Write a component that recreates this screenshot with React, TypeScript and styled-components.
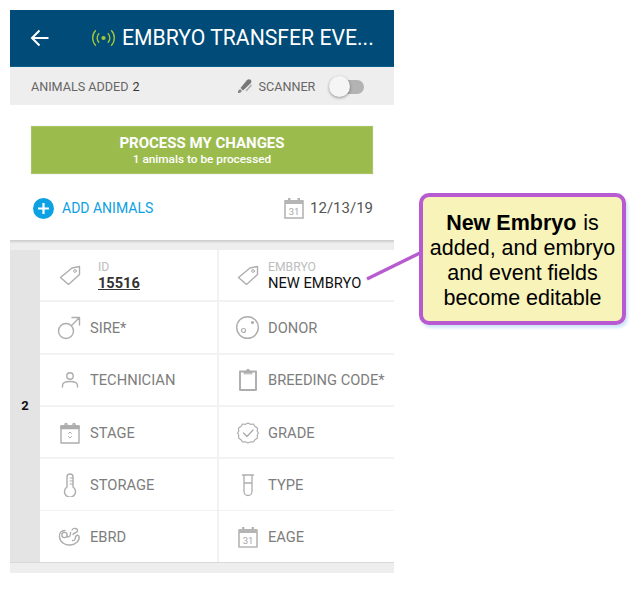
import React from "react";
import styled, { createGlobalStyle } from "styled-components";

const Global = createGlobalStyle`
  html, body { margin: 0; padding: 0; background: #fff; }
  #root { width: 638px; height: 613px; position: relative; overflow: hidden; }
  * { box-sizing: border-box; }
`;

const Phone = styled.div`
  margin: 10px 0 0 10px;
  width: 384px;
  font-family: Roboto, "Liberation Sans", sans-serif;
  display: flex;
  flex-direction: column;
`;

const Header = styled.header`
  height: 57px;
  background: #004b78;
  border-bottom: 1px solid #0b5f8f;
  display: flex;
  align-items: center;
  padding-left: 20px;
  color: #fff;
`;

const BackButton = styled.svg`
  width: 20px;
  height: 20px;
  flex: none;
  margin-right: 41px;
`;

const BeaconIcon = styled.svg`
  width: 25px;
  height: 20px;
  flex: none;
  margin-right: 6px;
`;

const Title = styled.h1`
  margin: 0;
  font-size: 21.2px;
  font-weight: 400;
  line-height: 26px;
  white-space: nowrap;
`;

const StatusBar = styled.div`
  height: 38px;
  background: #eeeeee;
  display: flex;
  align-items: center;
  padding-left: 21px;
  font-size: 12.6px;
  color: #666;
`;

const Count = styled.span`
  color: #333;
  margin-left: 4px;
`;

const ScannerIcon = styled.svg`
  width: 16px;
  height: 16px;
  margin-left: 97px;
  margin-right: 6px;
`;

const Toggle = styled.div`
  position: relative;
  width: 34px;
  height: 14px;
  border-radius: 7px;
  background: #b3b3b3;
  margin-left: 15px;
  margin-top: 1px;
`;

const Knob = styled.div`
  position: absolute;
  left: -1px;
  top: -4px;
  width: 21px;
  height: 21px;
  border-radius: 50%;
  background: #f5f5f5;
  box-shadow: 0 1px 3px rgba(0, 0, 0, 0.4);
`;

const ProcessButton = styled.div`
  margin: 21px 21px 0;
  height: 48px;
  background: #9bbb4d;
  border: 1px solid #a9c566;
  box-shadow: 0 0 1px rgba(0, 0, 0, 0.2);
  color: #fff;
  display: flex;
  flex-direction: column;
  align-items: center;
  justify-content: center;
  padding-top: 1px;
`;

const ProcessTitle = styled.div`
  font-size: 15px;
  font-weight: 700;
  line-height: 17px;
`;

const ProcessSub = styled.div`
  font-size: 11.8px;
  font-weight: 500;
  line-height: 14px;
`;

const ActionRow = styled.div`
  height: 66px;
  display: flex;
  align-items: center;
  padding: 2px 21px 0 23px;
`;

const AddCircle = styled.div`
  width: 21px;
  height: 21px;
  border-radius: 50%;
  background: #0ca1e2;
  display: flex;
  align-items: center;
  justify-content: center;
  margin-right: 8px;
`;

const AddLabel = styled.span`
  color: #0ca1e2;
  font-size: 14px;
`;

const DateWrap = styled.div`
  margin-left: auto;
  display: flex;
  align-items: center;
  gap: 5px;
  font-size: 15px;
  color: #555;
`;

const Band = styled.div`
  height: 10px;
  background: #eeeeee;
  box-shadow: inset 0 3px 2px -1px #cfcfcf;
`;

const Body = styled.div`
  display: flex;
  background: #f2f2f2;
`;

const IndexCol = styled.div`
  width: 30px;
  background: #e4e4e4;
  display: flex;
  align-items: center;
  justify-content: center;
  font-size: 13px;
  font-weight: 700;
  color: #111;
`;

const Grid = styled.div`
  flex: 1;
  display: grid;
  grid-template-columns: 177px 177px;
  grid-auto-rows: 50.4px;
  row-gap: 1.9px;
  overflow: hidden;
`;

const Cell = styled.div<{ $right?: boolean }>`
  background: #fff;
  display: flex;
  align-items: center;
  border-left: ${(p) => (p.$right ? "2px solid #f2f2f2" : "none")};
  min-width: 0;
  padding-left: ${(p) => (p.$right ? "16px" : "17px")};
  padding-top: 1px;
`;

const IconSlot = styled.div`
  width: 25px;
  height: 26px;
  flex: none;
  margin-right: 8px;
  display: flex;
  align-items: center;
  justify-content: center;
  svg {
    fill: none;
    stroke: #adadad;
    stroke-width: 1.4;
    stroke-linecap: round;
    stroke-linejoin: round;
  }
`;

const Label = styled.span`
  font-size: 14.7px;
  color: #7d7d7d;
  white-space: nowrap;
`;

const Stack = styled.div`
  display: flex;
  flex-direction: column;
  margin-top: 1px;
`;

const SmallLabel = styled.span<{ $indent?: boolean }>`
  font-size: 12.2px;
  line-height: 14px;
  color: #bdbdbd;
  padding-left: ${(p) => (p.$indent ? "8px" : "0")};
`;

const IdValue = styled.span`
  font-size: 14.6px;
  line-height: 18px;
  font-weight: 700;
  color: #333;
  margin-left: 8px;
  text-decoration: underline;
`;

const EmbryoValue = styled.span`
  font-size: 14.7px;
  line-height: 18px;
  color: #111;
  white-space: nowrap;
`;

const Footer = styled.div`
  height: 11px;
  background: #eeeeee;
  border-top: 1px solid #d9d9d9;
`;

const Leader = styled.svg`
  position: absolute;
  left: 360px;
  top: 245px;
  width: 70px;
  height: 40px;
`;

const Callout = styled.div`
  position: absolute;
  left: 419px;
  top: 193px;
  width: 207px;
  height: 132px;
  padding-top: 3px;
  background: #f7f3b9;
  border: 4px solid #b85bd0;
  border-radius: 10px;
  box-shadow: 2px 3px 3px rgba(120, 180, 240, 0.35);
  font-family: "Liberation Sans", Arial, sans-serif;
  font-size: 21.5px;
  line-height: 25px;
  color: #000;
  text-align: center;
  display: flex;
  flex-direction: column;
  justify-content: center;
`;

const Lead = styled.b`
  margin-right: 1px;
`;

const Calendar31 = ({ size = 22 }: { size?: number }) => (
  <svg width={size} height={size} viewBox="0 0 22 22" style={{ fill: "none" }}>
    <rect x="2" y="4" width="18" height="17" fill="none" stroke="#b5b5b5" strokeWidth="1.6" />
    <rect x="2" y="3" width="18" height="4" fill="#b5b5b5" stroke="none" />
    <rect x="5" y="1" width="2.5" height="4" fill="#b5b5b5" stroke="none" />
    <rect x="14.5" y="1" width="2.5" height="4" fill="#b5b5b5" stroke="none" />
    <text x="11" y="18" fontSize="9.5" textAnchor="middle" fill="#a5a5a5" stroke="none" fontFamily="Roboto, sans-serif">31</text>
  </svg>
);

const Tag = () => (
  <svg width="24" height="24" viewBox="0 0 24 24">
    <path d="M2.5 13.5 L14 4 L21.5 2.5 L21.5 10.5 L10.5 20.5 Z" />
    <circle cx="17" cy="7" r="1.4" strokeWidth="1" />
  </svg>
);

const Male = () => (
  <svg width="25" height="25" viewBox="0 0 25 25">
    <circle cx="9" cy="16" r="7.5" />
    <path d="M14.5 10.5 L22.5 2.5 M15 2.5 H22.5 V10" />
  </svg>
);

const Donor = () => (
  <svg width="25" height="25" viewBox="0 0 25 25">
    <circle cx="12.5" cy="12.5" r="10.8" />
    <circle cx="8.5" cy="15.5" r="2" strokeWidth="1.2" />
    <circle cx="17.5" cy="7.5" r="1.6" fill="#adadad" stroke="none" />
  </svg>
);

const Person = () => (
  <svg width="20" height="20" viewBox="0 0 20 20">
    <circle cx="10" cy="6" r="3.2" />
    <path d="M2.5 17 V15.5 C2.5 12.5 6.5 11.5 10 11.5 C13.5 11.5 17.5 12.5 17.5 15.5 V17" />
  </svg>
);

const Clipboard = () => (
  <svg width="22" height="24" viewBox="0 0 22 24">
    <path d="M7 3.5 H3 V22 H19 V3.5 H15" strokeWidth="1.9" />
    <path d="M7 5.5 V3 H9 C9.3 0.8 12.7 0.8 13 3 H15 V5.5 Z" fill="#adadad" stroke="#adadad" strokeWidth="0.8" />
  </svg>
);

const Stage = () => (
  <svg width="22" height="22" viewBox="0 0 22 22">
    <rect x="2" y="4" width="18" height="17" />
    <rect x="2" y="4" width="18" height="2.5" fill="#adadad" />
    <path d="M6 4 V2.5 A1 1 0 0 1 8 2.5 V4 M14 4 V2.5 A1 1 0 0 1 16 2.5 V4" />
    <path d="M9.5 11.5 L11 10 L12.5 11.5 M9.5 14.5 L11 16 L12.5 14.5" strokeWidth="1" />
  </svg>
);

const Grade = () => (
  <svg width="24" height="24" viewBox="0 0 24 24">
    <path d="M12 2 L14.5 3.3 L17.5 3 L19 5.5 L21.5 7 L21.2 10 L22.3 12 L21.2 14.5 L21.5 17 L19 18.7 L17.5 21 L14.5 20.8 L12 22 L9.5 20.8 L6.5 21 L5 18.7 L2.5 17 L2.8 14.5 L1.7 12 L2.8 10 L2.5 7 L5 5.5 L6.5 3 L9.5 3.3 Z" strokeWidth="1.2" />
    <path d="M7.5 12 L11 15.5 L17 9" />
  </svg>
);

const Thermometer = () => (
  <svg width="16" height="24" viewBox="0 0 16 24">
    <path d="M5 14 V4 A3 3 0 0 1 11 4 V14 A5.5 5.5 0 1 1 5 14 Z" />
    <path d="M8 5 H11 M8 8 H11 M8 11 H11" strokeWidth="1" />
  </svg>
);

const Tube = () => (
  <svg width="14" height="24" viewBox="0 0 14 24">
    <path d="M1.5 2 H12.5 M3 2 V18.5 A4 4 0 0 0 11 18.5 V2 M3 10 H11" strokeWidth="1.3" />
  </svg>
);

const Embryo = () => (
  <svg width="24" height="20" viewBox="0 0 24 20">
    <path d="M7 3.5 C3 3.5 1 6.5 1.5 10 C2 15.5 7.5 18.5 12.5 18 C18 17.5 22 13.5 21 9.5 C20.5 7.5 18 8 17.5 10" />
    <circle cx="6.5" cy="8" r="2.6" />
    <path d="M9 9.5 C11.5 10.5 13 8 12.5 5.5 M14 3 C15.5 0.5 20 1 19.5 4 C19 6 15.5 5.5 15 7.5 M14.5 13.5 C16 14 17.5 12.5 17.5 10" />
  </svg>
);

const fields = [
  { icon: <Male />, label: "SIRE*" },
  { icon: <Donor />, label: "DONOR" },
  { icon: <Person />, label: "TECHNICIAN" },
  { icon: <Clipboard />, label: "BREEDING CODE*" },
  { icon: <Stage />, label: "STAGE" },
  { icon: <Grade />, label: "GRADE" },
  { icon: <Thermometer />, label: "STORAGE" },
  { icon: <Tube />, label: "TYPE" },
  { icon: <Embryo />, label: "EBRD" },
  { icon: <Calendar31 />, label: "EAGE" },
];

export default function App() {
  return (
    <>
      <Global />
      <Phone>
        <Header>
          <BackButton viewBox="0 0 20 20">
            <path d="M18.5 10 H2.5 M9.5 2.5 L2 10 L9.5 17.5" fill="none" stroke="#fff" strokeWidth="2" />
          </BackButton>
          <BeaconIcon viewBox="0 0 26 20">
            <circle cx="13" cy="10" r="2.2" fill="#a4c639" />
            <path d="M8.5 5 A7 7 0 0 0 8.5 15 M17.5 5 A7 7 0 0 1 17.5 15" fill="none" stroke="#a4c639" strokeWidth="1.4" />
            <path d="M5 2 A11.5 11.5 0 0 0 5 18 M21 2 A11.5 11.5 0 0 1 21 18" fill="none" stroke="#a4c639" strokeWidth="1.4" />
          </BeaconIcon>
          <Title>EMBRYO TRANSFER EVE...</Title>
        </Header>
        <StatusBar>
          ANIMALS ADDED<Count>2</Count>
          <ScannerIcon viewBox="0 0 16 16">
            <path d="M5 13 L3 15 L1 15 L1 13 L3 11 Z" fill="#888" />
            <path d="M3.5 10 L10 2 Q12 0.5 14 2 Q15 4 13.5 5.5 L6 12.5 Z" fill="#777" />
            <path d="M14.5 7 L9 13" stroke="#aaa" strokeWidth="1.5" />
          </ScannerIcon>
          SCANNER
          <Toggle>
            <Knob />
          </Toggle>
        </StatusBar>
        <ProcessButton>
          <ProcessTitle>PROCESS MY CHANGES</ProcessTitle>
          <ProcessSub>1 animals to be processed</ProcessSub>
        </ProcessButton>
        <ActionRow>
          <AddCircle>
            <svg width="13" height="13" viewBox="0 0 13 13">
              <path d="M6.5 1 V12 M1 6.5 H12" stroke="#fff" strokeWidth="2.2" />
            </svg>
          </AddCircle>
          <AddLabel>ADD ANIMALS</AddLabel>
          <DateWrap>
            <Calendar31 />
            12/13/19
          </DateWrap>
        </ActionRow>
        <Band />
        <Body>
          <IndexCol>2</IndexCol>
          <Grid>
            <Cell>
              <IconSlot>
                <Tag />
              </IconSlot>
              <Stack>
                <SmallLabel $indent>ID</SmallLabel>
                <IdValue>15516</IdValue>
              </Stack>
            </Cell>
            <Cell $right>
              <IconSlot>
                <Tag />
              </IconSlot>
              <Stack>
                <SmallLabel>EMBRYO</SmallLabel>
                <EmbryoValue>NEW EMBRYO</EmbryoValue>
              </Stack>
            </Cell>
            {fields.map((f, i) => (
              <Cell key={f.label} $right={i % 2 === 1}>
                <IconSlot>{f.icon}</IconSlot>
                <Label>{f.label}</Label>
              </Cell>
            ))}
          </Grid>
        </Body>
        <Footer />
      </Phone>
      <Leader viewBox="0 0 70 40">
        <path d="M7 34 L62 7" stroke="#b85bd0" strokeWidth="3.4" fill="none" />
      </Leader>
      <Callout>
        <div>
          <Lead>New Embryo</Lead> is
        </div>
        <div>added, and embryo</div>
        <div>and event fields</div>
        <div>become editable</div>
      </Callout>
    </>
  );
}
